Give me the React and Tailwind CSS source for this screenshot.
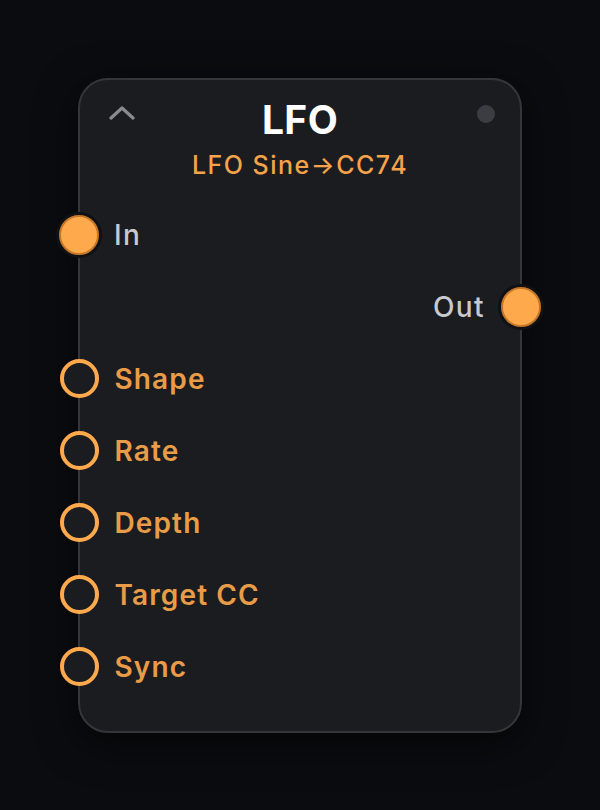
const params = ["Shape", "Rate", "Depth", "Target CC", "Sync"];

function FilledPort() {
  return (
    <span className="block w-[40px] h-[40px] rounded-full bg-[#ffa94d] border-2 border-[#c47726] shadow-[0_0_0_3px_#101114] shrink-0" />
  );
}

function HollowPort() {
  return <span className="block w-[39px] h-[39px] rounded-full border-[4px] border-[#ffa94d] bg-[#1b1c20] shrink-0" />;
}

export default function App() {
  return (
    <div
      className="min-h-screen w-full bg-[#0b0c0f] flex items-center justify-center"
      style={{ fontFamily: "Inter, 'Noto Sans', sans-serif" }}
    >
      <div className="w-[444px] h-[655px] rounded-[30px] border-2 border-[#35363a] bg-[#1b1c20] shadow-[0_10px_40px_rgba(0,0,0,0.6)] flex flex-col">
        <div className="pt-[18px] pb-[19px] px-0">
          <div className="grid grid-cols-[1fr_auto_1fr] items-center h-[44px]">
            <div className="pl-[29px] -translate-y-[7px]">
              <svg width="26" height="14" viewBox="0 0 26 14" fill="none">
                <path d="M2 12 L13 2 L24 12" stroke="#8a8a8f" strokeWidth="3.2" strokeLinecap="round" strokeLinejoin="round" />
              </svg>
            </div>
            <div className="text-white font-bold text-[39px] leading-[44px] tracking-[0.01em]">LFO</div>
            <div className="flex justify-end pr-[25px] -translate-y-[6px]">
              <span className="block w-[18px] h-[18px] rounded-full bg-[#3c3d42]" />
            </div>
          </div>
          <div className="mt-[8px] text-center text-[#f5a34a] text-[25px] leading-[30px] font-medium tracking-[0.06em]">
            LFO Sine→CC74
          </div>
        </div>

        <div className="flex items-center h-[72px] -ml-[21px]">
          <FilledPort />
          <span className="ml-[15px] text-[28px] font-medium text-[#c9c9ce] tracking-[0.05em]">In</span>
        </div>

        <div className="flex items-center justify-end h-[72px] -mr-[21px]">
          <span className="mr-[16px] text-[28px] font-medium text-[#c9c9ce] tracking-[0.05em]">Out</span>
          <FilledPort />
        </div>

        {params.map((p) => (
          <div key={p} className="flex items-center h-[72px] -ml-[21px]">
            <span className="ml-[0.5px]"><HollowPort /></span>
            <span className="ml-[16px] text-[28px] font-semibold text-[#e99c47] tracking-[0.04em]">{p}</span>
          </div>
        ))}
      </div>
    </div>
  );
}
